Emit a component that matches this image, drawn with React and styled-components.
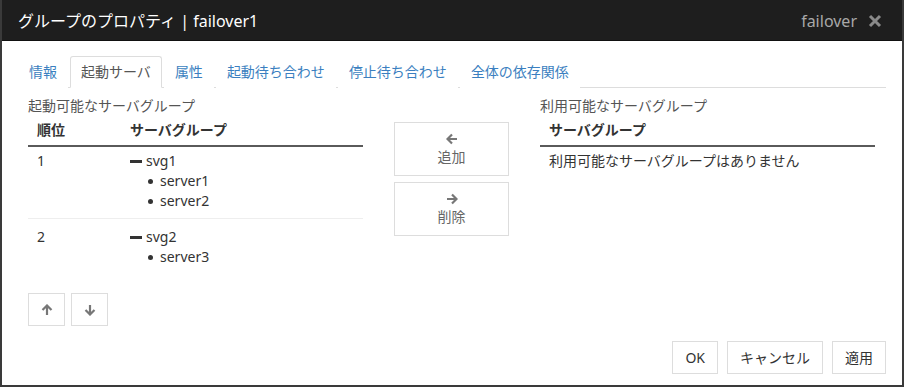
import React from 'react';
import styled, {createGlobalStyle} from 'styled-components';

const GlobalStyle = createGlobalStyle`
  html, body {
    margin: 0;
    padding: 0;
    background: #fff;
  }
  body {
    font-family: "Noto Sans", "Noto Sans CJK JP", sans-serif;
    font-size: 14px;
    color: #333;
  }
`;

const Dialog = styled.div`
  box-sizing: border-box;
  width: 904px;
  height: 387px;
  border: 2px solid #3a3a3a;
  border-top: none;
  display: flex;
  flex-direction: column;
  background: #fff;
`;

const Header = styled.div`
  height: 41px;
  background: #1e1e1e;
  border-bottom: 1px solid #111;
  box-sizing: border-box;
  padding: 0 20px 0 16px;
  display: flex;
  align-items: center;
  justify-content: space-between;
  color: #fff;
  font-size: 16px;
`;

const Title = styled.div`
  line-height: 24px;
  padding-top: 2px;
`;

const HeaderRight = styled.div`
  display: flex;
  align-items: center;
  gap: 11px;
  color: #a8a8a8;
  line-height: 24px;
  padding-top: 2px;
`;

const Body = styled.div`
  flex: 1;
  display: flex;
  flex-direction: column;
  padding: 15px 16px 11px 16px;
`;

const Tabs = styled.div`
  display: flex;
  border-bottom: 1px solid #ddd;
  height: 31px;
`;

const Tab = styled.div`
  box-sizing: border-box;
  height: 32px;
  margin-right: 2px;
  padding: 0 10px;
  line-height: 30px;
  border: 1px solid ${(p) => (p.$active ? '#ddd' : 'transparent')};
  border-bottom-color: ${(p) => (p.$active ? '#fff' : 'transparent')};
  border-radius: 3px 3px 0 0;
  color: ${(p) => (p.$active ? '#555' : '#3b7fc0')};
  background: #fff;
  white-space: nowrap;
`;

const Content = styled.div`
  display: flex;
  padding: 8px 10px 0 10px;
  gap: 31px;
`;

const Panel = styled.div`
  width: 335px;
  display: flex;
  flex-direction: column;
`;

const Label = styled.div`
  color: #555;
  line-height: 20px;
`;

const Table = styled.div`
  display: flex;
  flex-direction: column;
`;

const HeadRow = styled.div`
  display: flex;
  font-weight: bold;
  color: #333;
  line-height: 20px;
  padding: 4px 0 5px;
  border-bottom: 2px solid #5a5a5a;
`;

const Row = styled.div`
  display: flex;
  line-height: 20px;
  padding: ${(p) => (p.$first ? '4px 0 7px' : '8px 0 8px')};
  border-top: ${(p) => (p.$first ? 'none' : '1px solid #eee')};
`;

const Cell = styled.div`
  box-sizing: border-box;
  width: ${(p) => p.$w || 'auto'};
  flex: ${(p) => (p.$w ? 'none' : '1')};
  padding-left: 9px;
`;

const Group = styled.div`
  display: flex;
  align-items: center;
`;

const Dash = styled.span`
  display: inline-block;
  width: 12px;
  height: 3px;
  background: #333;
  margin-right: 4px;
`;

const Server = styled.div`
  display: flex;
  align-items: center;
  padding-left: 18px;
`;

const Bullet = styled.span`
  display: inline-block;
  width: 5px;
  height: 5px;
  border-radius: 50%;
  background: #333;
  margin-right: 7px;
`;

const Middle = styled.div`
  width: 115px;
  padding-top: 26px;
  display: flex;
  flex-direction: column;
  gap: 6px;
`;

const MoveButton = styled.div`
  box-sizing: border-box;
  height: 54px;
  border: 1px solid #ddd;
  display: flex;
  flex-direction: column;
  align-items: center;
  justify-content: center;
  color: #666;
  line-height: 20px;
`;

const IconWrap = styled.div`
  height: 16px;
  display: flex;
  align-items: center;
  justify-content: center;
`;

const OrderButtons = styled.div`
  display: flex;
  gap: 6px;
  margin-top: 18px;
`;

const SmallButton = styled.div`
  box-sizing: border-box;
  width: 37px;
  height: 33px;
  border: 1px solid #ddd;
  display: flex;
  align-items: center;
  justify-content: center;
`;

const Footer = styled.div`
  margin-top: auto;
  display: flex;
  justify-content: flex-end;
  gap: 9px;
`;

const Button = styled.div`
  box-sizing: border-box;
  height: 33px;
  padding: 0 12px;
  border: 1px solid #ddd;
  display: flex;
  align-items: center;
  color: #333;
  line-height: 20px;
`;

const Arrow = ({dir}) => {
  const rot = {left: 0, right: 180, up: 90, down: 270}[dir];
  return (
    <svg width="12" height="12" viewBox="0 0 12 12" style={{transform: `rotate(${rot}deg)`}}>
      <path d="M11 6H2M6 1.5L1.5 6L6 10.5" fill="none" stroke="#777" strokeWidth="2.2" strokeLinejoin="miter" />
    </svg>
  );
};

const Close = () => (
  <svg width="14" height="14" viewBox="0 0 14 14">
    <path d="M2 2L12 12M12 2L2 12" stroke="#8a8a8a" strokeWidth="3" />
  </svg>
);

const tabs = ['情報', '起動サーバ', '属性', '起動待ち合わせ', '停止待ち合わせ', '全体の依存関係'];

const groups = [
  {order: 1, name: 'svg1', servers: ['server1', 'server2']},
  {order: 2, name: 'svg2', servers: ['server3']},
];

export default function App() {
  return (
    <>
      <GlobalStyle />
      <Dialog>
        <Header>
          <Title>グループのプロパティ | failover1</Title>
          <HeaderRight>
            failover
            <Close />
          </HeaderRight>
        </Header>
        <Body>
          <Tabs>
            {tabs.map((t, i) => (
              <Tab key={t} $active={i === 1}>
                {t}
              </Tab>
            ))}
          </Tabs>
          <Content>
            <Panel>
              <Label>起動可能なサーバグループ</Label>
              <Table>
                <HeadRow>
                  <Cell $w="93px">順位</Cell>
                  <Cell>サーバグループ</Cell>
                </HeadRow>
                {groups.map((g, idx) => (
                  <Row key={g.name} $first={idx === 0}>
                    <Cell $w="93px">{g.order}</Cell>
                    <Cell>
                      <Group>
                        <Dash />
                        {g.name}
                      </Group>
                      {g.servers.map((s) => (
                        <Server key={s}>
                          <Bullet />
                          {s}
                        </Server>
                      ))}
                    </Cell>
                  </Row>
                ))}
              </Table>
              <OrderButtons>
                <SmallButton>
                  <Arrow dir="up" />
                </SmallButton>
                <SmallButton>
                  <Arrow dir="down" />
                </SmallButton>
              </OrderButtons>
            </Panel>
            <Middle>
              <MoveButton>
                <IconWrap>
                  <Arrow dir="left" />
                </IconWrap>
                追加
              </MoveButton>
              <MoveButton>
                <IconWrap>
                  <Arrow dir="right" />
                </IconWrap>
                削除
              </MoveButton>
            </Middle>
            <Panel>
              <Label>利用可能なサーバグループ</Label>
              <Table>
                <HeadRow>
                  <Cell>サーバグループ</Cell>
                </HeadRow>
                <Row $first>
                  <Cell>利用可能なサーバグループはありません</Cell>
                </Row>
              </Table>
            </Panel>
          </Content>
          <Footer>
            <Button>OK</Button>
            <Button>キャンセル</Button>
            <Button>適用</Button>
          </Footer>
        </Body>
      </Dialog>
    </>
  );
}
